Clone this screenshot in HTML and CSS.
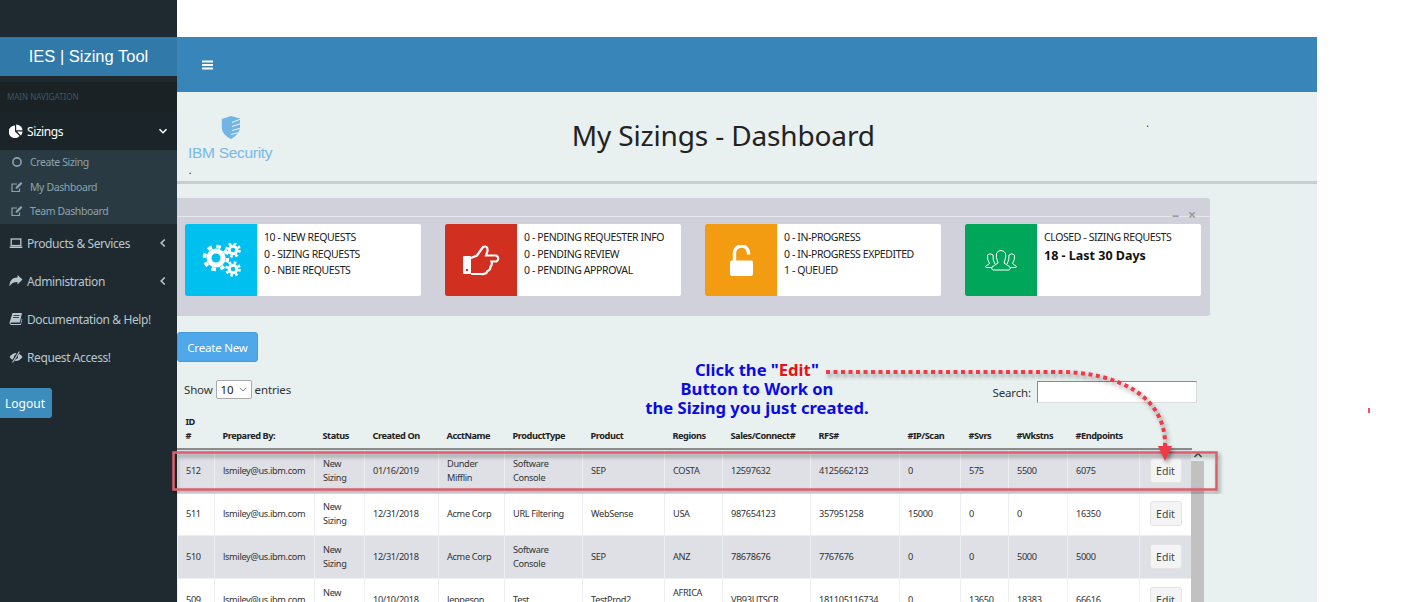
FILE: index.html
```html
<!DOCTYPE html>
<html>

<head>
  <title>IES | Sizing Tool</title>
  <link rel="stylesheet" href="styles.css">
</head>

<body>
  <div class="page">
    <aside class="sidebar">
      <div class="brand">IES | Sizing Tool</div>
      <div class="nav-label">MAIN NAVIGATION</div>
      <div class="nav-item active">
        <svg class="nav-icon" viewBox="0 0 14 14"><path d="M6 1.5V7.6L10.6 12A6.3 6.3 0 1 1 6 1.5Z" fill="#fff"/><path d="M7.2 0.5A6.3 6.3 0 0 1 13.5 6.3H7.2Z" fill="#fff"/><path d="M8 7.6H13.6A6.3 6.3 0 0 1 11.8 11.4Z" fill="#fff"/></svg>
        <span>Sizings</span>
        <svg class="nav-caret" viewBox="0 0 10 10"><path d="M1.5 3.2L5 6.7L8.5 3.2" fill="none" stroke="#fff" stroke-width="1.6"/></svg>
      </div>
      <div class="subnav">
        <div class="sub-item">
          <svg class="sub-icon" viewBox="0 0 12 12"><circle cx="6" cy="6" r="4.1" fill="none" stroke="#8aa4af" stroke-width="1.6"/></svg>
          <span>Create Sizing</span>
        </div>
        <div class="sub-item">
          <svg class="sub-icon" viewBox="0 0 12 12"><path d="M8.5 7.5V10.5H1V3H6" fill="none" stroke="#8aa4af" stroke-width="1.2"/><path d="M4.5 8L5 5.8L9.8 1L11.4 2.6L6.6 7.4Z" fill="#8aa4af"/></svg>
          <span>My Dashboard</span>
        </div>
        <div class="sub-item">
          <svg class="sub-icon" viewBox="0 0 12 12"><path d="M8.5 7.5V10.5H1V3H6" fill="none" stroke="#8aa4af" stroke-width="1.2"/><path d="M4.5 8L5 5.8L9.8 1L11.4 2.6L6.6 7.4Z" fill="#8aa4af"/></svg>
          <span>Team Dashboard</span>
        </div>
      </div>
      <div class="nav-item">
        <svg class="nav-icon" viewBox="0 0 14 14"><rect x="2.2" y="3" width="9.6" height="6.6" fill="none" stroke="#b8c7ce" stroke-width="1.3"/><path d="M0.5 10.5H13.5V11.2L12.8 12H1.2L0.5 11.2Z" fill="#b8c7ce"/></svg>
        <span>Products &amp; Services</span>
        <svg class="nav-caret" viewBox="0 0 10 10"><path d="M6.7 1.5L3.2 5L6.7 8.5" fill="none" stroke="#b8c7ce" stroke-width="1.6"/></svg>
      </div>
      <div class="nav-item">
        <svg class="nav-icon" viewBox="0 0 14 14"><path d="M13.5 5.5L8.5 1V3.6C3.5 3.6 0.5 6.4 0.5 12.5C2 9.4 4.6 8 8.5 8V10.4Z" fill="#b8c7ce"/></svg>
        <span>Administration</span>
        <svg class="nav-caret" viewBox="0 0 10 10"><path d="M6.7 1.5L3.2 5L6.7 8.5" fill="none" stroke="#b8c7ce" stroke-width="1.6"/></svg>
      </div>
      <div class="nav-item">
        <svg class="nav-icon" viewBox="0 0 14 14"><path d="M3.5 1H13L10.8 10.5H2.2Q1.5 10.5 1.6 11.4Q1.8 12 2.5 12H11.5L12.8 6.5L13.4 7L11.9 13H2.2Q0.5 12.8 0.5 10.8Z" fill="#b8c7ce"/><path d="M4.5 3.5H10.5M4 5.5H10" stroke="#1f2a30" stroke-width="0.8"/></svg>
        <span>Documentation &amp; Help!</span>
      </div>
      <div class="nav-item">
        <svg class="nav-icon" viewBox="0 0 14 14"><path d="M0.5 7Q3.5 3 7 3Q10.5 3 13.5 7Q10.5 11 7 11Q3.5 11 0.5 7Z" fill="#b8c7ce"/><circle cx="7" cy="7" r="2" fill="#1f2a30"/><path d="M3.2 12.5L10 1.5" stroke="#1f2a30" stroke-width="2.4"/><path d="M3.6 12.5L10.4 1.5" stroke="#b8c7ce" stroke-width="1.1"/></svg>
        <span>Request Access!</span>
      </div>
      <button class="logout">Logout</button>
    </aside>

    <main class="main">
      <div class="topbar"></div>
      <header class="navbar">
        <svg class="bars" viewBox="0 0 12 10"><path d="M0 1.2H12M0 5H12M0 8.8H12" stroke="#fff" stroke-width="2"/></svg>
      </header>

      <section class="title-block">
        <div class="logo">
          <svg class="logo-mark" viewBox="0 0 20 23"><path d="M10 0L19 2.5V12Q18 18.500 10 23Q1 18.500 0.8 12V3Z" fill="#72b4e6"/><path d="M11 6.500L20 3M11 10.500L20 7.500M11 14.500L20 12M10 18.500L20 16" stroke="#e8f0f0" stroke-width="1.100"/></svg>
          <div class="logo-text">IBM Security</div>
          <div class="logo-dot">.</div>
        </div>
        <h1>My Sizings - Dashboard</h1>
        <div class="title-dot">.</div>
      </section>

      <section class="panel">
        <div class="panel-tools"><span>&#8211;</span><span>&#215;</span></div>
        <div class="cards">
          <div class="card">
            <div class="card-icon blue">
              <svg class="gears" viewBox="0 0 40 34">
                <circle cx="15" cy="15" r="7" fill="none" stroke="#fff" stroke-width="5"/>
                <circle cx="15" cy="15" r="11.5" fill="none" stroke="#fff" stroke-width="3.6" stroke-dasharray="4.5 4.53"/>
                <circle cx="32" cy="7" r="3.8" fill="none" stroke="#fff" stroke-width="3"/>
                <circle cx="32" cy="7" r="6.5" fill="none" stroke="#fff" stroke-width="2.6" stroke-dasharray="2.55 2.55"/>
                <circle cx="32" cy="26" r="3.8" fill="none" stroke="#fff" stroke-width="3"/>
                <circle cx="32" cy="26" r="6.5" fill="none" stroke="#fff" stroke-width="2.6" stroke-dasharray="2.55 2.55"/>
              </svg>
            </div>
            <div class="card-text">
              <div>10 - NEW REQUESTS</div>
              <div>0 - SIZING REQUESTS</div>
              <div>0 - NBIE REQUESTS</div>
            </div>
          </div>
          <div class="card">
            <div class="card-icon red">
              <svg class="hand" viewBox="0 0 37 31">
                <rect x="0" y="11" width="8" height="18" rx="1" fill="#fff"/>
                <rect x="3" y="24" width="2" height="2" fill="#d12f1f"/>
                <path d="M8 13L14 10.5L20 2Q25 0 24.5 6L23 10.5H33.5Q37 13.5 33.5 16.5H28.5Q29.5 20 27.5 21.5Q27.5 25 24.5 26Q23.5 29.5 18.5 29H8" fill="none" stroke="#fff" stroke-width="2.2"/>
              </svg>
            </div>
            <div class="card-text">
              <div>0 - PENDING REQUESTER INFO</div>
              <div>0 - PENDING REVIEW</div>
              <div>0 - PENDING APPROVAL</div>
            </div>
          </div>
          <div class="card">
            <div class="card-icon orange">
              <svg class="lock" viewBox="0 0 23 31">
                <rect x="0" y="15.5" width="23" height="15.5" rx="2" fill="#fff"/>
                <path d="M4.5 16V8.5A7 7 0 0 1 18.5 7.5V9.5" fill="none" stroke="#fff" stroke-width="3.4"/>
              </svg>
            </div>
            <div class="card-text">
              <div>0 - IN-PROGRESS</div>
              <div>0 - IN-PROGRESS EXPEDITED</div>
              <div>1 - QUEUED</div>
            </div>
          </div>
          <div class="card">
            <div class="card-icon green">
              <svg class="group" viewBox="0 0 32 22">
                <g fill="none" stroke="#fff" stroke-width="1">
                  <path d="M13 14Q10.5 8 11.5 4Q16 -1 20.5 4Q21.5 8 19 14L25 18Q26 20.5 24 21H8Q6 20.5 7 18Z"/>
                  <path d="M10 15Q7.5 11 8 6Q5 3.5 2.5 6Q2 11 4.5 14.5L0.5 17.5Q0.5 18.5 2 18.5H6.5"/>
                  <path d="M22 15Q24.5 11 24 6Q27 3.5 29.5 6Q30 11 27.5 14.5L31.5 17.5Q31.5 18.5 30 18.5H25.5"/>
                </g>
              </svg>
            </div>
            <div class="card-text">
              <div>CLOSED - SIZING REQUESTS</div>
              <div class="card-strong">18 - Last 30 Days</div>
            </div>
          </div>
        </div>
      </section>

      <button class="create">Create New</button>

      <div class="filters">
        <label class="length">Show
          <span class="fake-select">10<svg viewBox="0 0 8 5"><path d="M0.8 0.8L4 4L7.2 0.8" fill="none" stroke="#777" stroke-width="0.9"/></svg></span>
          entries</label>
        <label class="search">Search: <input type="text"></label>
      </div>

      <div class="table-wrap">
        <table class="sizings">
          <colgroup>
            <col class="c-id"><col class="c-by"><col class="c-status"><col class="c-date"><col class="c-acct">
            <col class="c-type"><col class="c-prod"><col class="c-region"><col class="c-sales"><col class="c-rfs">
            <col class="c-ip"><col class="c-svrs"><col class="c-wk"><col class="c-end"><col class="c-edit">
          </colgroup>
          <thead>
            <tr>
              <th>ID<br>#</th><th>Prepared By:</th><th>Status</th><th>Created On</th><th>AcctName</th>
              <th>ProductType</th><th>Product</th><th>Regions</th><th>Sales/Connect#</th><th>RFS#</th>
              <th>#IP/Scan</th><th>#Svrs</th><th>#Wkstns</th><th>#Endpoints</th><th></th>
            </tr>
          </thead>
          <tbody>
            <tr class="odd">
              <td>512</td><td>lsmiley@us.ibm.com</td><td>New Sizing</td><td>01/16/2019</td><td>Dunder Mifflin</td>
              <td>Software Console</td><td>SEP</td><td>COSTA</td><td>12597632</td><td>4125662123</td>
              <td>0</td><td>575</td><td>5500</td><td>6075</td><td><button class="edit">Edit</button></td>
            </tr>
            <tr>
              <td>511</td><td>lsmiley@us.ibm.com</td><td>New Sizing</td><td>12/31/2018</td><td>Acme Corp</td>
              <td>URL Filtering</td><td>WebSense</td><td>USA</td><td>987654123</td><td>357951258</td>
              <td>15000</td><td>0</td><td>0</td><td>16350</td><td><button class="edit">Edit</button></td>
            </tr>
            <tr class="odd">
              <td>510</td><td>lsmiley@us.ibm.com</td><td>New Sizing</td><td>12/31/2018</td><td>Acme Corp</td>
              <td>Software Console</td><td>SEP</td><td>ANZ</td><td>78678676</td><td>7767676</td>
              <td>0</td><td>0</td><td>5000</td><td>5000</td><td><button class="edit">Edit</button></td>
            </tr>
            <tr>
              <td>509</td><td>lsmiley@us.ibm.com</td><td>New Sizing</td><td>10/10/2018</td><td>Jeppeson</td>
              <td>Test</td><td>TestProd2</td><td>AFRICA ASIA</td><td>VB93UTSCR</td><td>181105116734</td>
              <td>0</td><td>13650</td><td>18383</td><td>66616</td><td><button class="edit">Edit</button></td>
            </tr>
          </tbody>
        </table>
        <div class="scrollbar">
          <svg viewBox="0 0 10 6"><path d="M1.5 5L5 1.5L8.5 5" fill="none" stroke="#444" stroke-width="1.4"/></svg>
          <div class="thumb"></div>
        </div>
      </div>
    </main>
  </div>

  <div class="callout">Click the "<span class="callout-red">Edit</span>"<br>Button to Work on<br>the Sizing you just created.</div>
  <svg class="markup" viewBox="0 0 1406 602">
    <defs>
      <filter id="soft" x="-10%" y="-10%" width="120%" height="120%"><feDropShadow dx="2" dy="3" stdDeviation="2" flood-color="#000" flood-opacity="0.4"/></filter>
    </defs>
    <rect x="173.500" y="452.500" width="1043" height="37" fill="none" stroke="#dc5f6c" stroke-width="2.500" filter="url(#soft)"/>
    <g filter="url(#soft)">
      <path d="M826 372H1060C1115 372 1167 395 1165 447" fill="none" stroke="#ef3a46" stroke-width="4" stroke-dasharray="4 3.500"/>
      <path d="M1158 446H1172L1165 461Z" fill="#ef3a46"/>
    </g>
    <rect x="1368" y="408" width="2" height="5" fill="#ee5566"/>
  </svg>
</body>

</html>
```

FILE: styles.css
```css
html,
body {
  margin: 0;
  height: 602px;
  overflow: hidden;
  background: white;
}

body {
  font-family: "Noto Sans", sans-serif;
  color: #333;
}

.page {
  display: flex;
  width: 1317px;
  height: 602px;
}

/* sidebar */
.sidebar {
  flex: 0 0 177px;
  padding-top: 37px;
  box-sizing: border-box;
  background: #1f2a30;
  color: #b8c7ce;
}

.brand {
  height: 39px;
  line-height: 38px;
  text-align: center;
  color: white;
  background: #3079a8;
  font-family: "Liberation Sans", sans-serif;
  font-size: 16.5px;
}

.nav-label {
  height: 30px;
  margin-top: 6px;
  padding-left: 7px;
  line-height: 30px;
  font-size: 8px;
  color: #41565f;
  background: #1a2226;
}

.nav-item {
  display: flex;
  align-items: center;
  height: 38px;
  padding: 0 9px;
  font-size: 12px;
  letter-spacing: -0.4px;
}

.nav-item.active {
  color: white;
  background: #1b2529;
}

.nav-icon {
  flex: none;
  width: 14px;
  height: 14px;
  margin-right: 4px;
}

.nav-caret {
  width: 10px;
  height: 10px;
  margin-left: auto;
}

.subnav {
  background: #2a3a42;
  height: 74px;
}

.sub-item {
  display: flex;
  align-items: center;
  height: 24.6px;
  padding-left: 11px;
  font-size: 10.5px;
  letter-spacing: -0.4px;
  color: #8aa4af;
}

.sub-icon {
  flex: none;
  width: 12px;
  height: 12px;
  margin-right: 7px;
}

.logout {
  display: block;
  width: 52px;
  height: 30px;
  margin-top: 12px;
  padding: 0 2px 0 0;
  border: 0;
  border-radius: 0 3px 3px 0;
  background: #3c8dbc;
  color: white;
  font-family: inherit;
  font-size: 12px;
}

/* main column */
.main {
  flex: 1;
  min-width: 0;
  background: #e8f0f0;
}

.topbar {
  height: 37px;
  background: white;
}

.navbar {
  display: flex;
  align-items: center;
  height: 55px;
  padding-left: 25px;
  background: #3785b9;
}

.bars {
  width: 11px;
  height: 10px;
}

.title-block {
  display: flex;
  box-sizing: border-box;
  height: 92px;
  padding-left: 11px;
  border-bottom: 3px solid #c9cdd3;
}

.logo {
  flex: 0 0 84px;
  padding-top: 24px;
  text-align: center;
}

.logo-mark {
  display: block;
  width: 20px;
  height: 23px;
  margin: 0 auto 0 33px;
}

.logo-text {
  margin-top: 5px;
  font-family: "Liberation Sans", sans-serif;
  font-size: 15.5px;
  line-height: 17px;
  letter-spacing: -0.3px;
  color: #7ab8e8;
  white-space: nowrap;
}

.logo-dot {
  margin-top: 3px;
  padding-right: 80px;
  font-size: 10px;
  line-height: 12px;
  color: #222;
}

h1 {
  flex: 0 0 750px;
  margin: 25px 0 0 76px;
  text-align: center;
  font-size: 28px;
  line-height: 36px;
  letter-spacing: -0.15px;
  font-weight: 400;
  color: #222;
}

.title-dot {
  margin: 25px 0 0 48px;
  font-size: 10px;
  line-height: 12px;
}

/* status panel */
.panel {
  position: relative;
  width: 1033px;
  box-sizing: border-box;
  margin-top: 14px;
  height: 118px;
  padding: 26px 0 0 8px;
  background: #d0d1da;
  border-radius: 0 3px 3px 0;
}

.panel::before {
  content: "";
  position: absolute;
  left: 0;
  right: 0;
  top: 18px;
  height: 1px;
  background: #e6e7ec;
}

.panel-tools {
  position: absolute;
  top: 8px;
  right: 14px;
  display: flex;
  gap: 9px;
  font-size: 14px;
  line-height: 17px;
  font-weight: 700;
  color: #9a9aa2;
}

.cards {
  display: flex;
  gap: 24px;
}

.card {
  display: flex;
  width: 236px;
  height: 72px;
  background: white;
  border-radius: 2px;
}

.card-icon {
  display: flex;
  flex: 0 0 72px;
  align-items: center;
  justify-content: center;
  border-radius: 2px 0 0 2px;
}

.blue { background: #00c0ef; }
.red { background: #d12f1f; }
.orange { background: #f39c12; }
.green { background: #00a65a; }

.gears {
  width: 40px;
  height: 34px;
}

.hand {
  width: 37px;
  height: 31px;
}

.lock {
  width: 23px;
  height: 31px;
}

.group {
  width: 32px;
  height: 22px;
}

.card-text {
  padding: 5px 0 0 7px;
  font-size: 10.5px;
  line-height: 16.5px;
  letter-spacing: -0.4px;
  color: #222;
  white-space: nowrap;
}

.card-strong {
  font-size: 12.5px;
  line-height: 19px;
  letter-spacing: 0;
  font-weight: 700;
  color: #111;
}

.create {
  display: block;
  width: 81px;
  height: 30px;
  margin-top: 16px;
  padding: 0;
  border: 1px solid #4a9ad8;
  border-radius: 3px;
  background: #4ea8ea;
  color: white;
  font-family: inherit;
  font-size: 11.5px;
  letter-spacing: -0.2px;
}

/* table controls */
.filters {
  display: flex;
  align-items: center;
  justify-content: space-between;
  width: 1013px;
  height: 22px;
  margin-top: 19px;
  padding: 0 7px;
  font-size: 11.5px;
  letter-spacing: -0.15px;
  color: #333;
}

.length {
  display: flex;
  align-items: center;
  gap: 3px;
  margin-top: -6px;
}

.fake-select {
  display: flex;
  align-items: center;
  justify-content: space-between;
  box-sizing: border-box;
  width: 36px;
  height: 19px;
  padding: 0 4px;
  border: 1px solid #a9a9a9;
  border-radius: 2px;
  background: white;
  color: #222;
}

.fake-select svg {
  width: 8px;
  height: 5px;
}

.search {
  display: flex;
  align-items: center;
  gap: 6px;
}

.search input {
  box-sizing: border-box;
  width: 160px;
  height: 22px;
  padding: 0;
  border: 1px solid;
  border-color: #8a8a8a #ddd #ddd #8a8a8a;
  background: white;
}

/* table */
.table-wrap {
  position: relative;
  margin-top: 9px;
}

.sizings {
  table-layout: fixed;
  width: 1014px;
  border-collapse: collapse;
  font-size: 9.2px;
  line-height: 14px;
  letter-spacing: -0.33px;
  color: #333;
}

.c-id { width: 37px; }
.c-by { width: 100px; }
.c-status { width: 50px; }
.c-date { width: 74px; }
.c-acct { width: 66px; }
.c-type { width: 78px; }
.c-prod { width: 82px; }
.c-region { width: 58px; }
.c-sales { width: 88px; }
.c-rfs { width: 89px; }
.c-ip { width: 61px; }
.c-svrs { width: 48px; }
.c-wk { width: 59px; }
.c-end { width: 72px; }
.c-edit { width: 52px; }

.sizings th {
  height: 37px;
  box-sizing: border-box;
  padding: 0 8px 5px;
  vertical-align: bottom;
  text-align: left;
  font-weight: 700;
  letter-spacing: -0.45px;
  color: #222;
  white-space: normal;
  border-bottom: 2px solid #8b8b8b;
}

.sizings td {
  height: 43px;
  box-sizing: border-box;
  padding: 0 8px;
  vertical-align: middle;
  background: white;
  border: 1px solid #edf0f0;
}

.sizings tr.odd td {
  background: #dee0e6;
}

.sizings td:last-child {
  padding: 0;
  text-align: center;
}

.edit {
  width: 32px;
  height: 25px;
  padding: 0;
  border: 1px solid #e4e4e4;
  border-radius: 3px;
  background: #f4f4f4;
  color: #444;
  font-family: inherit;
  font-size: 10.5px;
}

.scrollbar {
  position: absolute;
  top: 38px;
  left: 1014px;
  width: 13px;
  height: 200px;
}

.scrollbar svg {
  display: block;
  width: 10px;
  height: 6px;
  margin: 2px auto 3px;
}

.thumb {
  height: 180px;
  background: #c1c1c1;
}

/* annotations pasted over the screenshot */
.callout {
  position: absolute;
  left: 600px;
  top: 360px;
  width: 314px;
  text-align: center;
  font-size: 16.6px;
  line-height: 19px;
  font-weight: 700;
  color: #0a0ae6;
}

.callout-red {
  color: #ee1111;
}

.markup {
  position: absolute;
  left: 0;
  top: 0;
  width: 1406px;
  height: 602px;
  pointer-events: none;
}
```
